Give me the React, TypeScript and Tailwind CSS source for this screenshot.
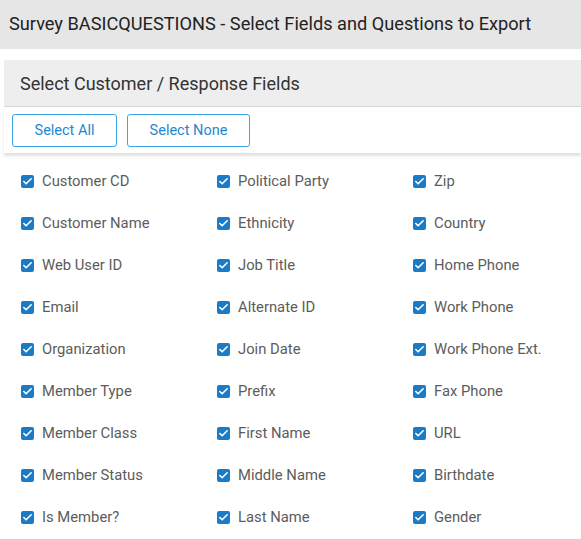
import { Check } from "lucide-react";

const columns: string[][] = [
  ["Customer CD", "Customer Name", "Web User ID", "Email", "Organization", "Member Type", "Member Class", "Member Status", "Is Member?"],
  ["Political Party", "Ethnicity", "Job Title", "Alternate ID", "Join Date", "Prefix", "First Name", "Middle Name", "Last Name"],
  ["Zip", "Country", "Home Phone", "Work Phone", "Work Phone Ext.", "Fax Phone", "URL", "Birthdate", "Gender"],
];

function FieldCheck({ label }: { label: string }) {
  return (
    <label className="flex items-center gap-[8px] h-[42px]">
      <span className="flex items-center justify-center size-[13px] rounded-[2px] bg-[#1a7cc6] shrink-0">
        <Check className="size-[11px] text-white" strokeWidth={3.5} />
      </span>
      <span className="text-[14.8px] text-[#5c5c5c]">{label}</span>
    </label>
  );
}

export default function App() {
  return (
    <div className="w-[581px] h-[539px] overflow-hidden bg-white font-['Roboto',sans-serif]">
      {/* Page title */}
      <div className="h-[49px] bg-[#e6e6e6] flex items-center pl-[9px] pb-[2px]">
        <p className="text-[18.2px] text-[#222]">Survey BASICQUESTIONS - Select Fields and Questions to Export</p>
      </div>

      {/* Panel */}
      <div className="mt-[11px] ml-[4px]">
        <div className="h-[47px] bg-[#eeeeee] border-b border-[#d6d6d6] flex items-center pl-[16px]">
          <p className="text-[18px] text-[#333]">Select Customer / Response Fields</p>
        </div>
        <div className="flex gap-[10px] pl-[8px] pt-[7px] pb-[6px] shadow-[0_3px_3px_rgba(0,0,0,0.12)]">
          <button className="w-[105px] h-[33px] border border-[#3aa6e3] rounded-[3px] text-[14.5px] text-[#1e88d2] bg-white">
            Select All
          </button>
          <button className="w-[123px] h-[33px] border border-[#3aa6e3] rounded-[3px] text-[14.5px] text-[#1e88d2] bg-white">
            Select None
          </button>
        </div>
      </div>

      {/* Fields */}
      <div className="grid grid-cols-[196px_196px_1fr] pl-[21px] pt-[7px]">
        {columns.map((col, i) => (
          <div key={i} className="flex flex-col">
            {col.map((f) => (
              <FieldCheck key={f} label={f} />
            ))}
          </div>
        ))}
      </div>
    </div>
  );
}
